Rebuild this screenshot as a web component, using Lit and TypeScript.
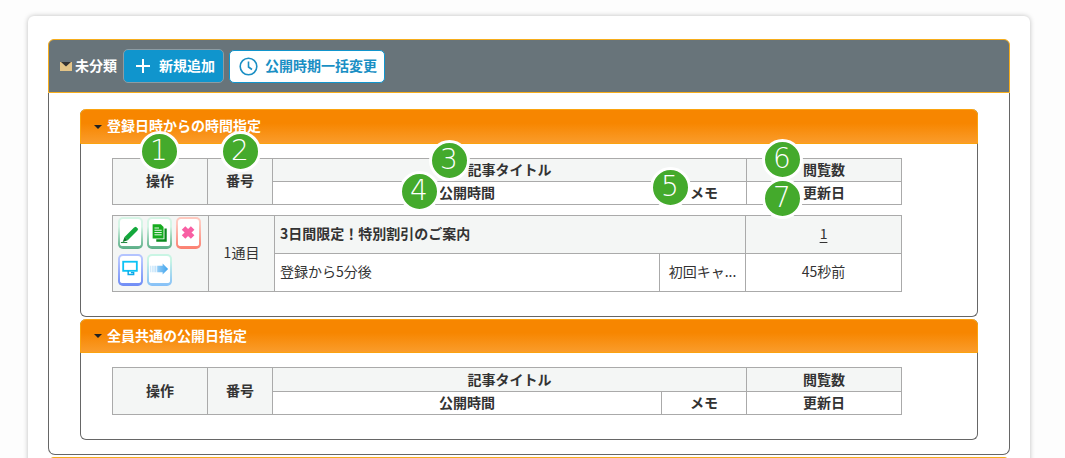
import { LitElement, html, css, svg } from "lit";
import { customElement } from "lit/decorators.js";

const iconPencil = svg`<path d="M5 15.500L15.500 5l2 -1 2.500 2.500-1 2L8.500 19z" fill="#13a83c"/><path d="M5 15.500l3.500 3.500-5.500 2z" fill="#0c7a2a"/><path d="M1 21.500h7" stroke="#0c7a2a" stroke-width="1"/>`;
const iconDoc = svg`<path d="M17 6h2.500v14.500H8V18h9z" fill="#0a8a1e"/><path d="M4 1.500h9l3 3V17H4z" fill="#16ab1e"/><path d="M6 5.500h5M6 8h8M6 10.500h8M6 13h8" stroke="#fff" stroke-width="1"/>`;
const iconX = svg`<path d="M5 5.500l10 10M15 5.500L5 15.500" stroke="#f85fa3" stroke-width="5.500"/>`;
const iconPc = svg`<rect x="3.500" y="3" width="15" height="10" fill="#fff" stroke="#0cc3f5" stroke-width="2"/><path d="M9 13v4h6v-2h-3" fill="none" stroke="#0ca8e8" stroke-width="1.600"/>`;
const iconArrow = svg`<defs><linearGradient id="ar"><stop offset="0" stop-color="#cfe9fb"/><stop offset="1" stop-color="#3fa4ee"/></linearGradient></defs><path d="M1 7.500h1v7H1zM3 7.500h1v7H3zM5 7.500h1v7H5zM7 7.500h1v7H7zM9 7.500h6V5l6 6-6 6v-2.500H9z" fill="url(#ar)"/>`;

@customElement("app-root")
export class AppRoot extends LitElement {
  static styles = css`
    :host {
      display: block;
      height: 458px;
      overflow: hidden;
      background: #fdfdfd;
      font-family: "Noto Sans CJK JP", "Noto Sans", sans-serif;
      font-size: 14px;
      color: #333;
      line-height: 1.3;
    }
    .card {
      margin: 16px 35px 0 28px;
      padding: 23px 20px 0;
      height: 500px;
      background: #fff;
      border-radius: 6px;
      box-shadow: 0 0 5px rgba(0, 0, 0, 0.25);
    }
    .panel-head {
      display: flex;
      align-items: center;
      height: 54px;
      box-sizing: border-box;
      padding: 0 0 0 11px;
      background: #68747a;
      border: 1px solid #f6ad1c;
      border-radius: 6px 6px 0 0;
      color: #fff;
      font-weight: 700;
    }
    .next { margin-top: 2px; }
    .mail { margin-right: 3px; }
    .txt { margin-top: -2px; }
    .label { margin-right: 6px; }
    .btn {
      display: flex;
      align-items: center;
      box-sizing: border-box;
      border-radius: 5px;
      font-weight: 700;
    }
    .btn-add {
      width: 101px;
      height: 34px;
      padding-left: 12px;
      gap: 9px;
      background: #1095cd;
      border: 1px solid #8d9ca3;
      color: #fff;
    }
    .btn-time {
      width: 156px;
      height: 33px;
      margin-left: 5px;
      padding-left: 9px;
      gap: 7px;
      background: #fff;
      border: 1px solid #1095cd;
      color: #1a8fc4;
    }
    .panel-body {
      padding: 16px 31px 14px;
      border: 1px solid #666;
      border-top: 0;
      border-radius: 0 0 7px 7px;
      display: flex;
      flex-direction: column;
      gap: 2px;
    }
    .section {
      position: relative;
      border: 1px solid #666;
      border-top: 0;
      border-radius: 6px;
    }
    .section-head {
      display: flex;
      align-items: center;
      gap: 5px;
      height: 35px;
      box-sizing: border-box;
      margin: 0 -1px;
      padding-left: 13px;
      border: 1px solid #fba30f;
      border-radius: 6px 6px 0 0;
      background: linear-gradient(#f78600 40%, #fa9c2b);
      color: #fff;
      font-weight: 700;
    }
    .section-head.short { height: 34px; }
    .caret {
      width: 0;
      height: 0;
      border: 4px solid transparent;
      border-top: 4px solid #222;
      border-bottom: 0;
    }
    .section-body {
      padding: 14px 31px 24px;
      display: flex;
      flex-direction: column;
      gap: 10px;
    }
    table {
      width: 789px;
      border-collapse: collapse;
      table-layout: fixed;
    }
    td, th {
      border: 1px solid #aaa;
      padding: 0 0 2px;
      box-sizing: border-box;
      text-align: center;
      font-size: 14px;
      font-weight: 400;
      color: #333;
      overflow: hidden;
    }
    .head th { height: 23px; font-weight: 700; line-height: 20px; }
    .head th.span { padding-bottom: 3px; }
    .head.tall .first th { height: 24px; }
    .grey { background: #f4f6f5; }
    .data td { height: 38px; }
    td.left { text-align: left; padding-left: 5px; }
    .bold { font-weight: 700; }
    td.clip { white-space: nowrap; text-overflow: ellipsis; padding: 0 6px 2px; }
    .count { text-decoration: underline; text-underline-offset: 3px; }
    td.ops-cell { padding: 0; }
    .ops {
      display: grid;
      grid-template-columns: repeat(3, 24.5px);
      column-gap: 4.7px;
      row-gap: 4.5px;
      padding: 1px 0 5px 5px;
    }
    .op {
      height: 32px;
      box-sizing: border-box;
      border: 2px solid transparent;
      border-bottom-width: 3px;
      border-radius: 5px;
      display: flex;
      align-items: center;
      justify-content: center;
    }
    .op-green { background: linear-gradient(#fff, #fff) padding-box, linear-gradient(#d6f5e6 30%, #5aae86) border-box; }
    .op-red { background: linear-gradient(#fff, #fff) padding-box, linear-gradient(#ffc9bf 20%, #fb7f70) border-box; }
    .op-blue { background: linear-gradient(#fff, #fff) padding-box, linear-gradient(#b4c4ff 20%, #6f8cf5) border-box; }
    .op-sky { background: linear-gradient(#fff, #fff) padding-box, linear-gradient(#c9f5e4 20%, #86c0f8) border-box; }
    .op svg { width: 20px; height: 22px; display: block; }
    .badge {
      position: absolute;
      box-sizing: border-box;
      width: 41px;
      height: 41px;
      border: 3px solid #fff;
      border-radius: 50%;
      background: #44aa2c;
      color: #fff;
      display: flex;
      align-items: center;
      justify-content: center;
      font-family: "DejaVu Sans", sans-serif;
      font-size: 28px;
      font-weight: 200;
      line-height: 1;
    }
  `;

  private headTable(widths: number[], tall = false) {
    return html`<table class="head ${tall ? "tall" : ""}">
      <colgroup>${widths.map((w) => html`<col style="width:${w}px" />`)}</colgroup>
      <tr class="first">
        <th class="grey span" rowspan="2">操作</th>
        <th class="grey span" rowspan="2">番号</th>
        <th class="grey" colspan="2">記事タイトル</th>
        <th class="grey">閲覧数</th>
      </tr>
      <tr>
        <th>公開時間</th>
        <th>メモ</th>
        <th>更新日</th>
      </tr>
    </table>`;
  }

  render() {
    const widths = [95, 65, 389, 85, 155];
    const badges: [number, number, number][] = [
      [1, 159, 151], [2, 240, 151], [3, 449, 160], [4, 419, 191],
      [5, 670, 187], [6, 782, 159], [7, 782, 198],
    ];
    return html`
      <div class="card">
        <div class="panel-head">
          <svg class="mail" width="12" height="9" viewBox="0 0 12 9"><path d="M0 0h12v9H0z" fill="#e3c487"/><path d="M1 0h10L6 4.500z" fill="#333"/></svg>
          <span class="label txt">未分類</span>
          <div class="btn btn-add">
            <svg width="14" height="14" viewBox="0 0 14 14"><path d="M7 0v14M0 7h14" stroke="#fff" stroke-width="2"/></svg>
            <span class="txt">新規追加</span>
          </div>
          <div class="btn btn-time">
            <svg width="19" height="19" viewBox="0 0 19 19"><circle cx="9.500" cy="9.500" r="8.300" fill="none" stroke="#1a8fc4" stroke-width="1.600"/><path d="M9.500 4.500v5.500l3.500 2.500" fill="none" stroke="#1a8fc4" stroke-width="1.600"/></svg>
            <span class="txt">公開時期一括変更</span>
          </div>
        </div>
        <div class="panel-body">
          <div class="section">
            <div class="section-head"><span class="caret"></span><span class="txt">登録日時からの時間指定</span></div>
            <div class="section-body">
              ${this.headTable(widths)}
              <table class="data">
                <colgroup>
                  <col style="width:96px" /><col style="width:66px" /><col style="width:385px" /><col style="width:86px" /><col style="width:156px" />
                </colgroup>
                <tr>
                  <td class="grey ops-cell" rowspan="2">
                    <div class="ops">
                      <div class="op op-green"><svg viewBox="0 0 22 22">${iconPencil}</svg></div>
                      <div class="op op-green"><svg viewBox="0 0 22 22">${iconDoc}</svg></div>
                      <div class="op op-red"><svg viewBox="0 0 22 22">${iconX}</svg></div>
                      <div class="op op-blue"><svg viewBox="0 0 22 22">${iconPc}</svg></div>
                      <div class="op op-sky"><svg viewBox="0 0 22 22">${iconArrow}</svg></div>
                    </div>
                  </td>
                  <td class="grey" rowspan="2">1通目</td>
                  <td class="grey left bold" colspan="2">3日間限定！特別割引のご案内</td>
                  <td class="grey"><span class="count">1</span></td>
                </tr>
                <tr>
                  <td class="left">登録から5分後</td>
                  <td class="clip">初回キャ...</td>
                  <td>45秒前</td>
                </tr>
              </table>
            </div>
            ${badges.map(([n, x, y]) => html`<div class="badge" style="left:${x - 20.5 - 81}px;top:${y - 20.5 - 109}px">${n}</div>`)}
          </div>
          <div class="section">
            <div class="section-head short"><span class="caret"></span><span class="txt">全員共通の公開日指定</span></div>
            <div class="section-body">${this.headTable(widths, true)}</div>
          </div>
        </div>
        <div class="panel-head next"></div>
      </div>
    `;
  }
}
